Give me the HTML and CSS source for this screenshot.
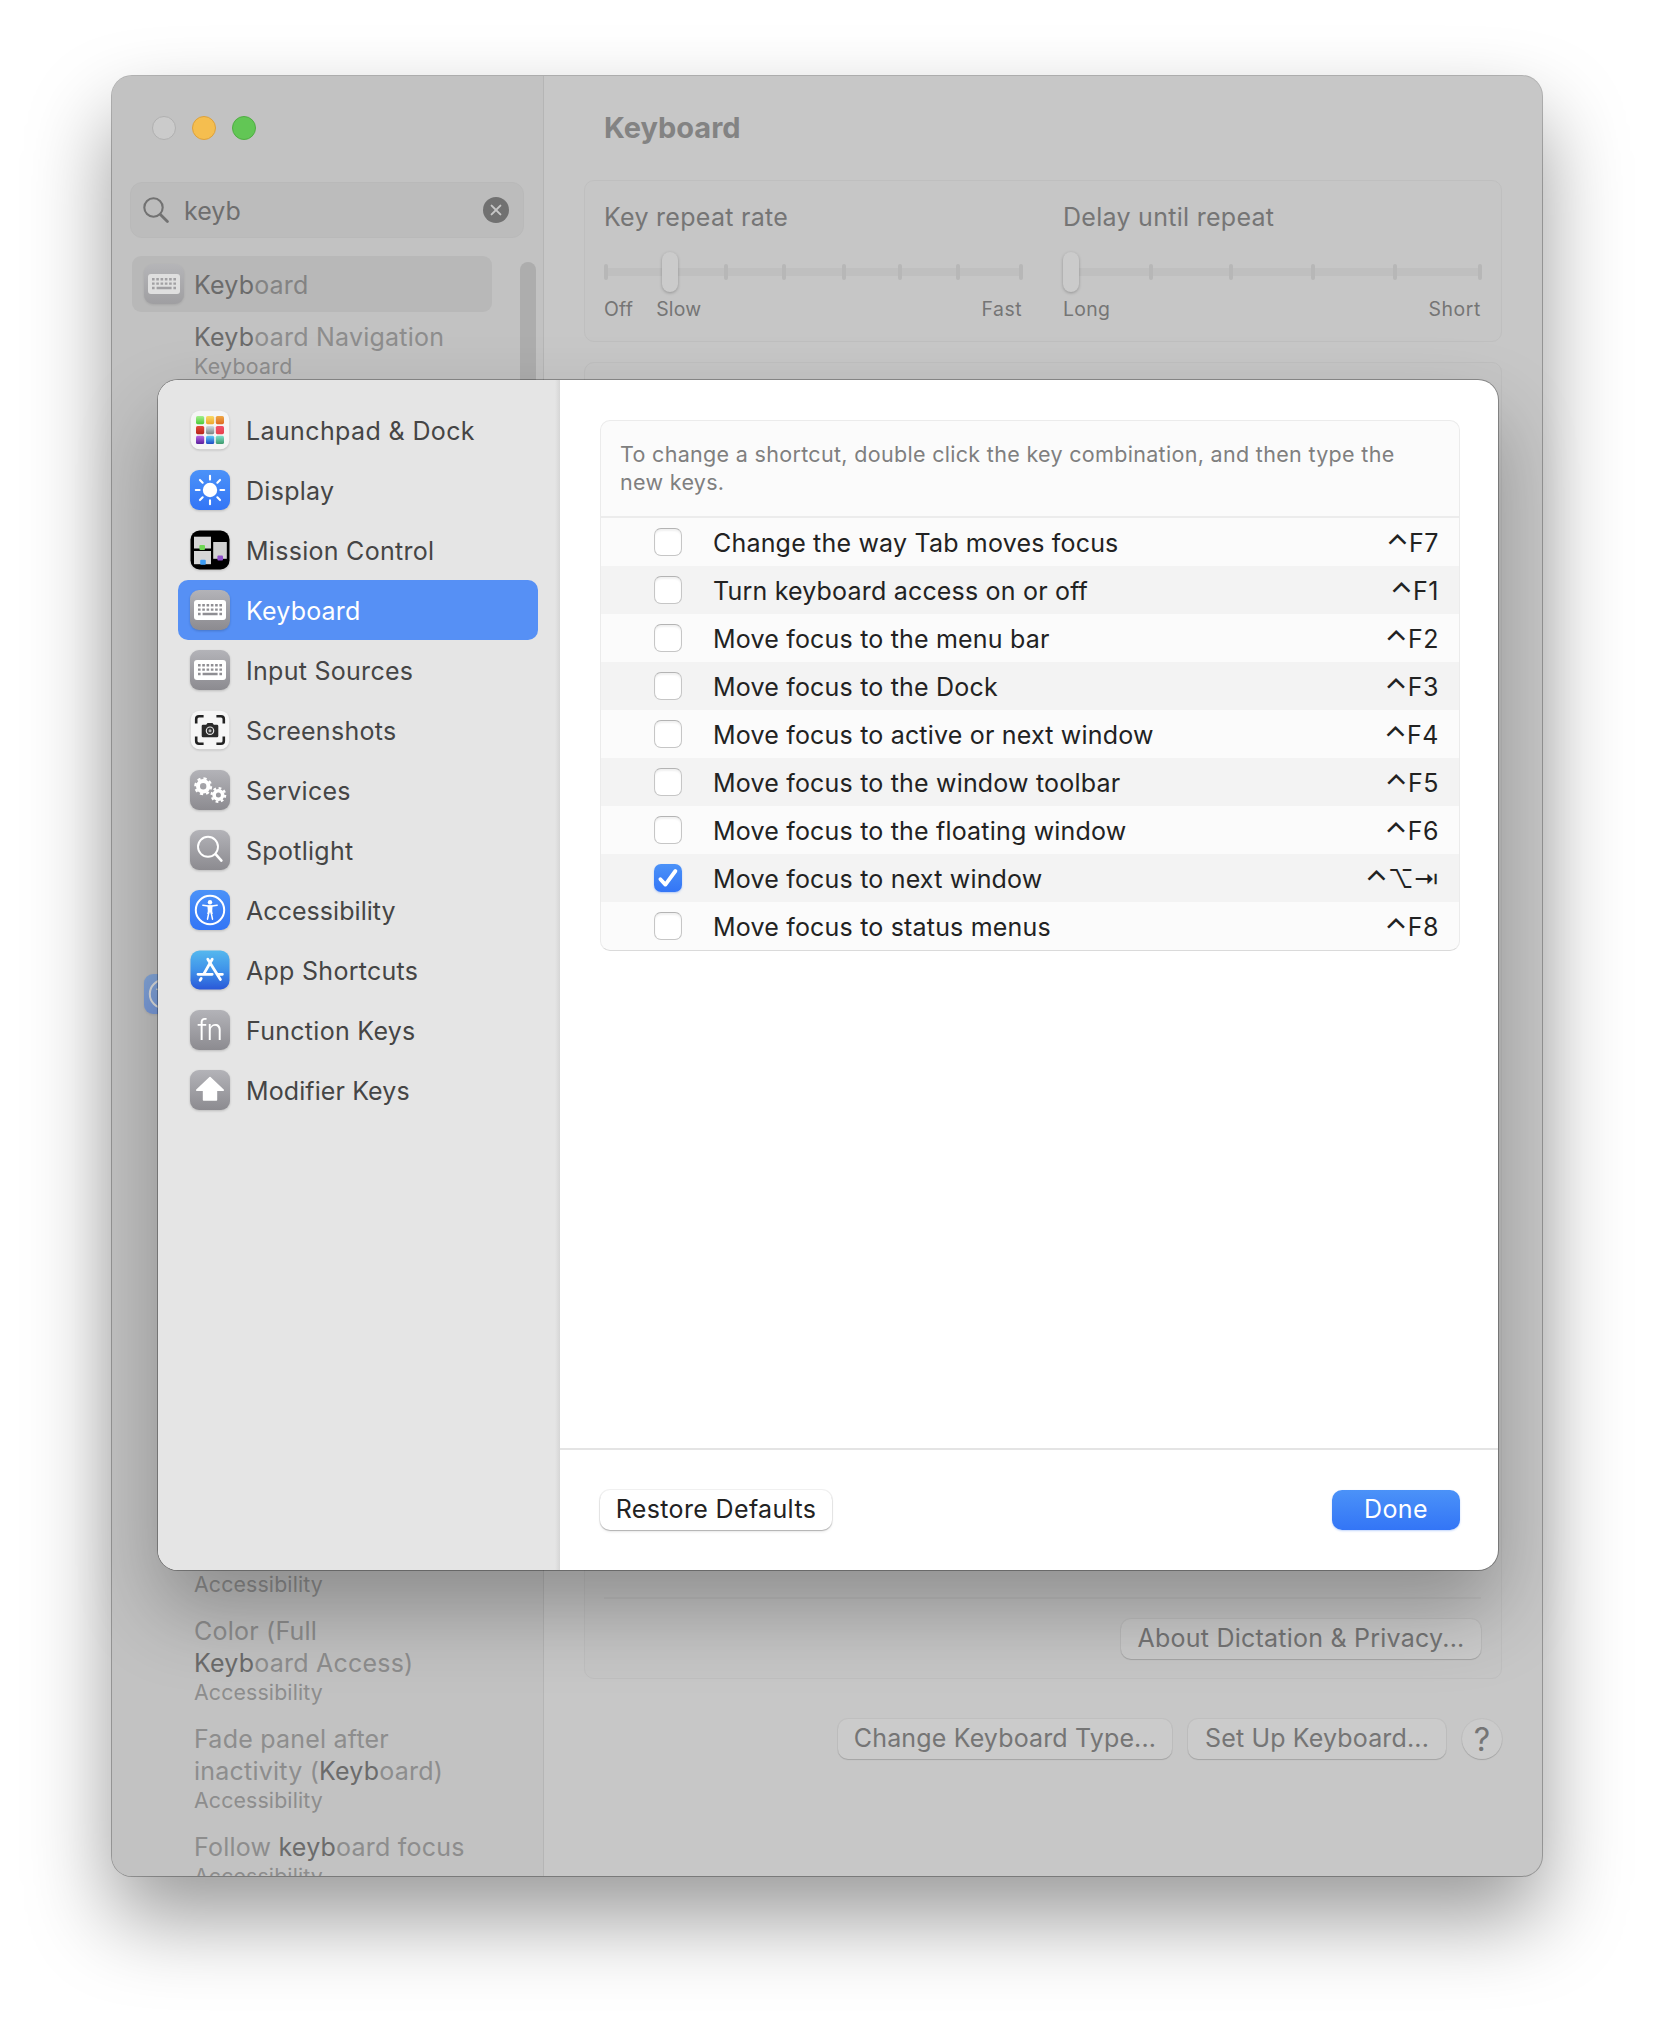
FILE: index.html
```
<!DOCTYPE html>
<html lang="en">
<head>
<meta charset="utf-8">
<title>Keyboard</title>
<link rel="stylesheet" href="styles.css">
</head>
<body>
<svg class="defs" width="0" height="0" aria-hidden="true">
  <defs>
    <linearGradient id="gray" x1="0" y1="0" x2="0" y2="1"><stop offset="0" stop-color="#b3b3b8"/><stop offset="1" stop-color="#8c8b90"/></linearGradient>
    <linearGradient id="blue" x1="0" y1="0" x2="0" y2="1"><stop offset="0" stop-color="#4b92f8"/><stop offset="1" stop-color="#3375f6"/></linearGradient>
    <linearGradient id="store" x1="0" y1="0" x2="0" y2="1"><stop offset="0" stop-color="#55b8ee"/><stop offset=".5" stop-color="#3f93ea"/><stop offset="1" stop-color="#2a58d8"/></linearGradient>
    <linearGradient id="c1" x1="0" y1="0" x2="0" y2="1"><stop offset="0" stop-color="#a4f08c"/><stop offset="1" stop-color="#4cc93a"/></linearGradient>
    <linearGradient id="c2" x1="0" y1="0" x2="0" y2="1"><stop offset="0" stop-color="#f8da66"/><stop offset="1" stop-color="#eda52d"/></linearGradient>
    <linearGradient id="c3" x1="0" y1="0" x2="0" y2="1"><stop offset="0" stop-color="#f0a845"/><stop offset="1" stop-color="#dd6a22"/></linearGradient>
    <linearGradient id="c4" x1="0" y1="0" x2="0" y2="1"><stop offset="0" stop-color="#e5483c"/><stop offset="1" stop-color="#b62419"/></linearGradient>
    <linearGradient id="c5" x1="0" y1="0" x2="0" y2="1"><stop offset="0" stop-color="#cfdbe2"/><stop offset="1" stop-color="#7c8283"/></linearGradient>
    <linearGradient id="c6" x1="0" y1="0" x2="0" y2="1"><stop offset="0" stop-color="#f0506c"/><stop offset="1" stop-color="#e8414c"/></linearGradient>
    <linearGradient id="c7" x1="0" y1="0" x2="0" y2="1"><stop offset="0" stop-color="#b865e6"/><stop offset="1" stop-color="#5a1f9c"/></linearGradient>
    <linearGradient id="c8" x1="0" y1="0" x2="0" y2="1"><stop offset="0" stop-color="#5ccdf8"/><stop offset="1" stop-color="#1e49c4"/></linearGradient>
    <linearGradient id="c9" x1="0" y1="0" x2="0" y2="1"><stop offset="0" stop-color="#7fe0cb"/><stop offset="1" stop-color="#3f9a6c"/></linearGradient>
    <symbol id="keyboard" viewBox="0 0 40 40">
      <rect width="40" height="40" rx="9" fill="url(#gray)"/>
      <rect x="4" y="10" width="32" height="20" rx="3" fill="#fff"/>
      <path d="M8 15.2h24M8 19.6h24" stroke="#8f8e93" stroke-width="2.4" stroke-dasharray="2.6 1.68" fill="none"/>
      <path d="M8 24h2.6M12.6 24h15M29.4 24H32" stroke="#8f8e93" stroke-width="2.4" fill="none"/>
    </symbol>
    <symbol id="access" viewBox="0 0 40 40">
      <rect width="40" height="40" rx="9" fill="url(#blue)"/>
      <circle cx="20" cy="20" r="14.2" fill="none" stroke="#fff" stroke-width="2"/>
      <circle cx="20" cy="12.2" r="2.2" fill="#fff"/>
      <path d="M12.8 15.2 18 16h4l5.2-.8M17.5 29.2l1.3-6.4M22.5 29.2l-1.3-6.4" fill="none" stroke="#fff" stroke-width="1.5" stroke-linecap="round"/>
      <path d="M17.4 15.6h5.2l-.4 5.4.6 3h-1.7L20 22l-1.1 2h-1.7l.6-3z" fill="#fff"/>
    </symbol>
  </defs>
</svg>

<div class="window">
  <aside class="sidebar">
    <div class="lights"><i class="close"></i><i class="minimize"></i><i class="zoom"></i></div>
    <div class="search">
      <svg width="26" height="26" viewBox="0 0 26 26" fill="none" stroke="#727272" stroke-linecap="round"><circle cx="10.5" cy="10.5" r="9.2" stroke-width="2.1"/><path d="M17.4 17.4l7 7" stroke-width="2.8"/></svg>
      <span>keyb</span>
      <svg class="clear" width="26" height="26" viewBox="0 0 26 26"><circle cx="13" cy="13" r="13" fill="#717171"/><path d="M8.6 8.6l8.8 8.8M17.4 8.6l-8.8 8.8" stroke="#c6c6c6" stroke-width="2" stroke-linecap="round"/></svg>
    </div>
    <div class="results">
      <div class="list">
        <div class="app selected"><svg class="icon dim"><use href="#keyboard"/></svg><span><b>Keyb</b>oard</span></div>
        <div class="result first"><p><b>Keyb</b>oard Navigation</p><small>Keyboard</small></div>
        <div class="app group"><svg class="icon dim"><use href="#access"/></svg></div>
        <div class="result tail"><small class="acc">Accessibility</small></div>
        <div class="result"><p>Color (Full<br><b>Keyb</b>oard Access)</p><small class="acc">Accessibility</small></div>
        <div class="result"><p>Fade panel after<br>inactivity (<b>Keyb</b>oard)</p><small class="acc">Accessibility</small></div>
        <div class="result"><p>Follow <b>keyb</b>oard focus</p><small class="acc">Accessibility</small></div>
      </div>
      <div class="scrollbar"></div>
    </div>
  </aside>

  <main class="pane">
    <h1>Keyboard</h1>
    <section class="card rates">
      <div class="rate">
        <label>Key repeat rate</label>
        <svg class="slider" width="418" height="40" viewBox="0 0 418 40">
          <rect x="1" y="16" width="416" height="8" fill="#bfbfbf"/>
          <g fill="#b7b7b7"><rect x="0" y="12" width="4" height="16" rx="2"/><rect x="120" y="12" width="4" height="16" rx="2"/><rect x="178" y="12" width="4" height="16" rx="2"/><rect x="238" y="12" width="4" height="16" rx="2"/><rect x="294" y="12" width="4" height="16" rx="2"/><rect x="352" y="12" width="4" height="16" rx="2"/><rect x="415" y="12" width="4" height="16" rx="2"/></g>
          <rect class="thumb" x="58" y="0" width="16" height="40" rx="8"/>
        </svg>
        <div class="ends"><span>Off</span><span class="slow">Slow</span><span class="end">Fast</span></div>
      </div>
      <div class="rate">
        <label>Delay until repeat</label>
        <svg class="slider" width="418" height="40" viewBox="0 0 418 40">
          <rect x="4" y="16" width="413" height="8" fill="#bfbfbf"/>
          <g fill="#b7b7b7"><rect x="86" y="12" width="4" height="16" rx="2"/><rect x="166" y="12" width="4" height="16" rx="2"/><rect x="248" y="12" width="4" height="16" rx="2"/><rect x="330" y="12" width="4" height="16" rx="2"/><rect x="415" y="12" width="4" height="16" rx="2"/></g>
          <rect class="thumb" x="0" y="0" width="16" height="40" rx="8"/>
        </svg>
        <div class="ends"><span>Long</span><span class="end short">Short</span></div>
      </div>
    </section>
    <section class="card options">
      <hr>
      <button class="push muted w360">About Dictation &amp; Privacy...</button>
    </section>
    <div class="actions">
      <button class="push muted w334">Change Keyboard Type...</button>
      <button class="push muted w258">Set Up Keyboard...</button>
      <button class="push muted help">?</button>
    </div>
  </main>
</div>

<div class="sheet">
  <nav class="categories">
    <a><svg class="icon" viewBox="0 0 40 40"><rect x=".7" y=".7" width="38.6" height="38.6" rx="9" fill="#f5f5f5"/>
      <g><rect x="6" y="6" width="8.2" height="8.2" rx="1.6" fill="url(#c1)"/><rect x="16" y="6" width="8.2" height="8.2" rx="1.6" fill="url(#c2)"/><rect x="25.8" y="6" width="8.2" height="8.2" rx="1.6" fill="url(#c3)"/>
      <rect x="6" y="16" width="8.2" height="8.2" rx="1.6" fill="url(#c4)"/><rect x="16" y="16" width="8.2" height="8.2" rx="1.6" fill="url(#c5)"/><rect x="25.8" y="16" width="8.2" height="8.2" rx="1.6" fill="url(#c6)"/>
      <rect x="6" y="25.8" width="8.2" height="8.2" rx="1.6" fill="url(#c7)"/><rect x="16" y="25.8" width="8.2" height="8.2" rx="1.6" fill="url(#c8)"/><rect x="25.8" y="25.8" width="8.2" height="8.2" rx="1.6" fill="url(#c9)"/></g></svg><span>Launchpad &amp; Dock</span></a>
    <a><svg class="icon" viewBox="0 0 40 40"><rect width="40" height="40" rx="9" fill="url(#blue)"/><circle cx="20" cy="20" r="7.2" fill="#fff"/><path d="M20 5.8v3.8M20 30.4v3.8M5.8 20h3.8M30.4 20h3.8M9.96 9.96l2.7 2.7M27.34 27.34l2.7 2.7M30.04 9.96l-2.7 2.7M12.66 27.34l-2.7 2.7" stroke="#fff" stroke-width="2.1" stroke-linecap="round"/></svg><span>Display</span></a>
    <a><svg class="icon" viewBox="0 0 40 40"><rect x=".5" y=".5" width="39" height="39" rx="9" fill="#000"/>
      <rect x="4" y="6.7" width="17" height="11.8" fill="#d6d6d6"/><rect x="4" y="21" width="17" height="13.2" fill="#d6d6d6"/><rect x="23.2" y="12" width="13.6" height="16.8" fill="#d2d2d2"/>
      <rect x="9.4" y="15" width="5.6" height="5" rx="1" fill="#6fd854"/><rect x="10.2" y="29.8" width="5.6" height="5" rx="1" fill="#3c9cf4"/><rect x="27.4" y="25.4" width="5.6" height="5" rx="1" fill="#9050cc"/></svg><span>Mission Control</span></a>
    <a class="current"><svg class="icon"><use href="#keyboard"/></svg><span>Keyboard</span></a>
    <a><svg class="icon"><use href="#keyboard"/></svg><span>Input Sources</span></a>
    <a><svg class="icon" viewBox="0 0 40 40"><rect x=".7" y=".7" width="38.6" height="38.6" rx="9" fill="#f6f6f6"/>
      <path d="M6.2 13.4V9a2.8 2.8 0 0 1 2.8-2.8h4.6M26.4 6.2H31A2.8 2.8 0 0 1 33.8 9v4.4M33.8 26.6V31a2.8 2.8 0 0 1-2.8 2.8h-4.6M13.6 33.8H9A2.8 2.8 0 0 1 6.2 31v-4.4" fill="none" stroke="#222" stroke-width="2.6"/>
      <path d="M13 14.8h3.2l1.3-1.9h5l1.3 1.9H27q1.3 0 1.3 1.3v9.8q0 1.3-1.3 1.3H13q-1.3 0-1.3-1.3v-9.8q0-1.3 1.3-1.3z" fill="#2a2a2a"/><circle cx="20" cy="20.7" r="3.7" fill="#333" stroke="#e6e6e6" stroke-width="1.2"/><circle cx="20" cy="20.7" r="1.5" fill="#bbb"/></svg><span>Screenshots</span></a>
    <a><svg class="icon" viewBox="0 0 40 40"><rect width="40" height="40" rx="9" fill="url(#gray)"/>
      <g fill="none" stroke="#fff"><circle cx="13.2" cy="16.3" r="5.2" stroke-width="4"/><circle cx="13.2" cy="16.3" r="7.9" stroke-width="2.2" stroke-dasharray="3.2 3.005"/><circle cx="28.4" cy="25" r="4.3" stroke-width="3.6"/><circle cx="28.4" cy="25" r="6.8" stroke-width="2.2" stroke-dasharray="2.75 2.59"/></g></svg><span>Services</span></a>
    <a><svg class="icon" viewBox="0 0 40 40"><rect width="40" height="40" rx="9" fill="url(#gray)"/><circle cx="18" cy="16.8" r="10" fill="none" stroke="#fff" stroke-width="1.9"/><path d="M25.6 24.2l5.8 6.4" stroke="#fff" stroke-width="2.6" stroke-linecap="round"/></svg><span>Spotlight</span></a>
    <a class="tight"><svg class="icon"><use href="#access"/></svg><span>Accessibility</span></a>
    <a><svg class="icon" viewBox="0 0 40 40"><rect x=".5" y=".5" width="39" height="39" rx="9" fill="url(#store)"/><path d="M22.2 9.2 14 23.6M8 24.3h14.2M28.4 24.3h4M17.8 9.2l12.6 20.4M11.2 28.4l-1.1 1.8" fill="none" stroke="#fff" stroke-width="2.8" stroke-linecap="round"/></svg><span>App Shortcuts</span></a>
    <a><i class="icon fn">fn</i><span>Function Keys</span></a>
    <a class="modifier"><svg class="icon" viewBox="0 0 40 40"><rect width="40" height="40" rx="9" fill="url(#gray)"/><path d="M20 7.6 33.2 20.2H26.4V30H13.6V20.2H6.8z" fill="#fff" stroke="#fff" stroke-width="1.6" stroke-linejoin="round"/></svg><span>Modifier Keys</span></a>
  </nav>
  <div class="detail">
    <div class="shortcuts">
      <p class="hint">To change a shortcut, double click the key combination, and then type the new keys.</p>
      <div class="row"><i class="check"></i><span>Change the way Tab moves focus</span><kbd><em>⌃</em>F7</kbd></div>
      <div class="row"><i class="check"></i><span>Turn keyboard access on or off</span><kbd><em>⌃</em>F1</kbd></div>
      <div class="row"><i class="check"></i><span>Move focus to the menu bar</span><kbd><em>⌃</em>F2</kbd></div>
      <div class="row"><i class="check"></i><span>Move focus to the Dock</span><kbd><em>⌃</em>F3</kbd></div>
      <div class="row"><i class="check"></i><span>Move focus to active or next window</span><kbd><em>⌃</em>F4</kbd></div>
      <div class="row"><i class="check"></i><span>Move focus to the window toolbar</span><kbd><em>⌃</em>F5</kbd></div>
      <div class="row"><i class="check"></i><span>Move focus to the floating window</span><kbd><em>⌃</em>F6</kbd></div>
      <div class="row"><i class="check on"><svg width="28" height="28" viewBox="0 0 28 28"><path d="M6.4 15.2l5 5.4L21.4 7" fill="none" stroke="#fff" stroke-width="3.8" stroke-linecap="round" stroke-linejoin="round"/></svg></i><span>Move focus to next window</span><kbd class="symbols"><em>⌃</em>⌥⇥</kbd></div>
      <div class="row"><i class="check"></i><span>Move focus to status menus</span><kbd><em>⌃</em>F8</kbd></div>
    </div>
    <footer>
      <button class="push restore">Restore Defaults</button>
      <button class="push done">Done</button>
    </footer>
  </div>
</div>
</body>
</html>
```
FILE: styles.css
```
* { box-sizing: border-box; }
body {
  margin: 0;
  height: 2024px;
  padding: 76px 112px 0;
  position: relative;
  overflow: hidden;
  background: #fff;
  font: 430 25px/32px Inter, "Liberation Sans", sans-serif;
  letter-spacing: .28px;
}
p, h1 { margin: 0; }
b { font-weight: inherit; color: #6b6b6b; }
.defs { display: block; position: absolute; }

.window {
  display: flex;
  width: 1430px;
  height: 1800px;
  border-radius: 20px;
  background: #c7c7c7;
  box-shadow: 0 0 0 1px rgba(0,0,0,.28), 0 42px 84px rgba(0,0,0,.4);
  overflow: hidden;
}
.sidebar {
  width: 432px;
  display: flex;
  flex-direction: column;
  background: #c2c2c2;
  border-right: 1px solid #b5b5b5;
}
.lights { display: flex; gap: 16px; padding: 40px 0 0 40px; height: 106px; flex: none; }
.lights i { width: 24px; height: 24px; border-radius: 50%; border: 1px solid #b0b0b0; background: #cbcbcb; }
.lights .minimize { background: #f5be4f; border-color: #dca13c; }
.lights .zoom { background: #62c655; border-color: #50ad43; }
.search {
  flex: none;
  display: flex;
  align-items: center;
  width: 394px;
  height: 56px;
  margin-left: 18px;
  padding: 0 14px 0 12px;
  border: 1px solid #b9b9b9;
  border-radius: 12px;
  background: #bcbcbc;
  color: #6e6e6e;
}
.search span { margin-left: 15px; letter-spacing: 0; padding-top: 1px; }
.search .clear { margin-left: auto; }
.results { display: flex; margin-top: 18px; flex: 1; min-height: 0; color: #8d8d8d; overflow: hidden; }
.list { width: 360px; margin-left: 20px; }
.app { display: flex; align-items: center; gap: 10px; height: 56px; padding-left: 12px; border-radius: 9px; }
.app span { padding-top: 2px; }
.selected { background: #b8b8b8; color: #838383; letter-spacing: .2px; }
.group { margin-top: 586px; }
.icon { width: 40px; height: 40px; flex: none; display: block; filter: drop-shadow(0 1px 1px rgba(0,0,0,.18)); }
.dim { opacity: .5; }
.selected .dim { opacity: .55; }
.result { padding-left: 62px; margin-bottom: 17px; letter-spacing: .22px; }
.result small { display: block; font-size: 21.3px; line-height: 27px; letter-spacing: .3px; }
.result small.acc { letter-spacing: .15px; }
.first { margin: 9px 0 0; }
.tail { margin-top: 549px; }
.scrollbar { width: 16px; height: 760px; margin: 6px 0 0 28px; border-radius: 8px; background: #adadad; }

.pane { flex: 1; padding: 32px 40px 0; color: #757575; }
h1 { font-size: 29px; line-height: 40px; font-weight: 700; letter-spacing: 0; color: #838383; height: 72px; padding-left: 20px; }
.card { border: 1px solid #bfbfbf; border-radius: 10px; background: #c6c6c6; margin-bottom: 20px; }
.rates { height: 162px; display: flex; gap: 41px; padding: 20px 20px 0 19px; }
.rate { width: 418px; display: flex; flex-direction: column; }
.rate label { height: 32px; }
.slider { margin-top: 19px; overflow: visible; }
.thumb { fill: #cbcbcb; filter: drop-shadow(0 1px 1.5px rgba(0,0,0,.25)); }
.ends { display: flex; font-size: 19.4px; line-height: 24px; margin-top: 5px; }
.slow { margin-left: 23px; letter-spacing: .15px; }
.end { margin-left: auto; letter-spacing: .5px; }
.short { letter-spacing: .6px; }
.options { height: 1317px; margin-bottom: 40px; padding: 0 20px 19px 19px; display: flex; flex-direction: column; justify-content: flex-end; align-items: flex-end; }
hr { width: 100%; height: 2px; margin: 0 0 20px; border: 0; background: rgba(0,0,0,.03); }
.actions { display: flex; justify-content: flex-end; gap: 16px; }

.push {
  height: 40px;
  border: 0;
  border-radius: 10px;
  padding: 0 0 2px;
  background: #fff;
  color: #222;
  font: 430 25px/32px Inter, "Liberation Sans", sans-serif;
  white-space: nowrap;
  box-shadow: 0 0 0 1px rgba(0,0,0,.06), 0 1px 1px rgba(0,0,0,.2), 0 2px 3px rgba(0,0,0,.08);
}
.muted { background: #cbcbcb; color: #757575; box-shadow: 0 0 0 1px rgba(0,0,0,.04), 0 1px 1px rgba(0,0,0,.14); letter-spacing: .15px; }
.w360 { width: 360px; letter-spacing: .23px; }
.w334 { width: 334px; }
.w258 { width: 258px; }
.help { width: 40px; border-radius: 50%; font-size: 32px; padding: 2px 0 0; }

.sheet {
  position: absolute;
  left: 158px;
  top: 380px;
  width: 1340px;
  height: 1190px;
  display: flex;
  border-radius: 20px;
  background: #fff;
  box-shadow: 0 0 0 1px rgba(0,0,0,.3), 0 40px 80px rgba(0,0,0,.28);
  overflow: hidden;
}
.categories {
  width: 402px;
  padding: 20px 22px 0 20px;
  background: linear-gradient(to left, #d6d6d6, #e5e5e5 5px);
  color: #454545;
}
.categories a { display: flex; align-items: center; gap: 16px; height: 60px; padding-left: 12px; border-radius: 10px; }
.categories a:first-child { letter-spacing: .38px; }
.categories span { padding-top: 2px; }
.categories .current { background: #5690f5; color: #fff; letter-spacing: .2px; }
.categories .tight { letter-spacing: .05px; }
.categories .modifier { letter-spacing: .1px; }
.fn { border-radius: 9px; background: linear-gradient(#b3b3b8, #8c8b90); color: #fff; font-size: 28px; line-height: 40px; font-weight: 330; font-style: normal; letter-spacing: -.6px; text-align: center; }

.detail { flex: 1; display: flex; flex-direction: column; justify-content: space-between; }
.shortcuts { margin: 40px 38px 0 40px; border: 1px solid #ebebeb; border-bottom-color: #dadada; border-radius: 10px; background: #fbfbfb; overflow: hidden; color: #222; letter-spacing: .19px; }
.hint { height: 97px; padding: 19px 30px 0 19px; border-bottom: 2px solid #ececec; font-size: 21.5px; line-height: 28px; letter-spacing: .315px; color: #7f7f7f; }
.row { display: flex; align-items: center; height: 48px; padding: 0 20px 0 53px; }
.row:nth-child(odd) { background: #f3f3f3; }
.row span { margin-left: 31px; padding-top: 1px; }
.row kbd { margin-left: auto; font: inherit; letter-spacing: .5px; padding-top: 1px; }
.row em { font-size: 30px; font-style: normal; font-weight: 400; line-height: 0; vertical-align: -4px; letter-spacing: 0; }
.row .symbols { letter-spacing: 0; }
.check { width: 28px; height: 28px; border-radius: 7px; border: 1px solid #c6c6c6; border-top-color: #b4b4b4; background: #fff; box-shadow: inset 0 2px 2px rgba(0,0,0,.06); }
.check.on { border: 0; background: linear-gradient(#4b92f8, #3375f6); box-shadow: 0 1px 2px rgba(51,117,246,.35); }
.check svg { display: block; }
footer { display: flex; justify-content: space-between; height: 122px; padding: 40px 38px 0 40px; border-top: 2px solid #e4e4e4; }
.restore { width: 232px; letter-spacing: .35px; }
.done { width: 128px; background: linear-gradient(#4b92f8, #3375f6); color: #fff; letter-spacing: .4px; box-shadow: 0 1px 2px rgba(51,117,246,.3); }
```
